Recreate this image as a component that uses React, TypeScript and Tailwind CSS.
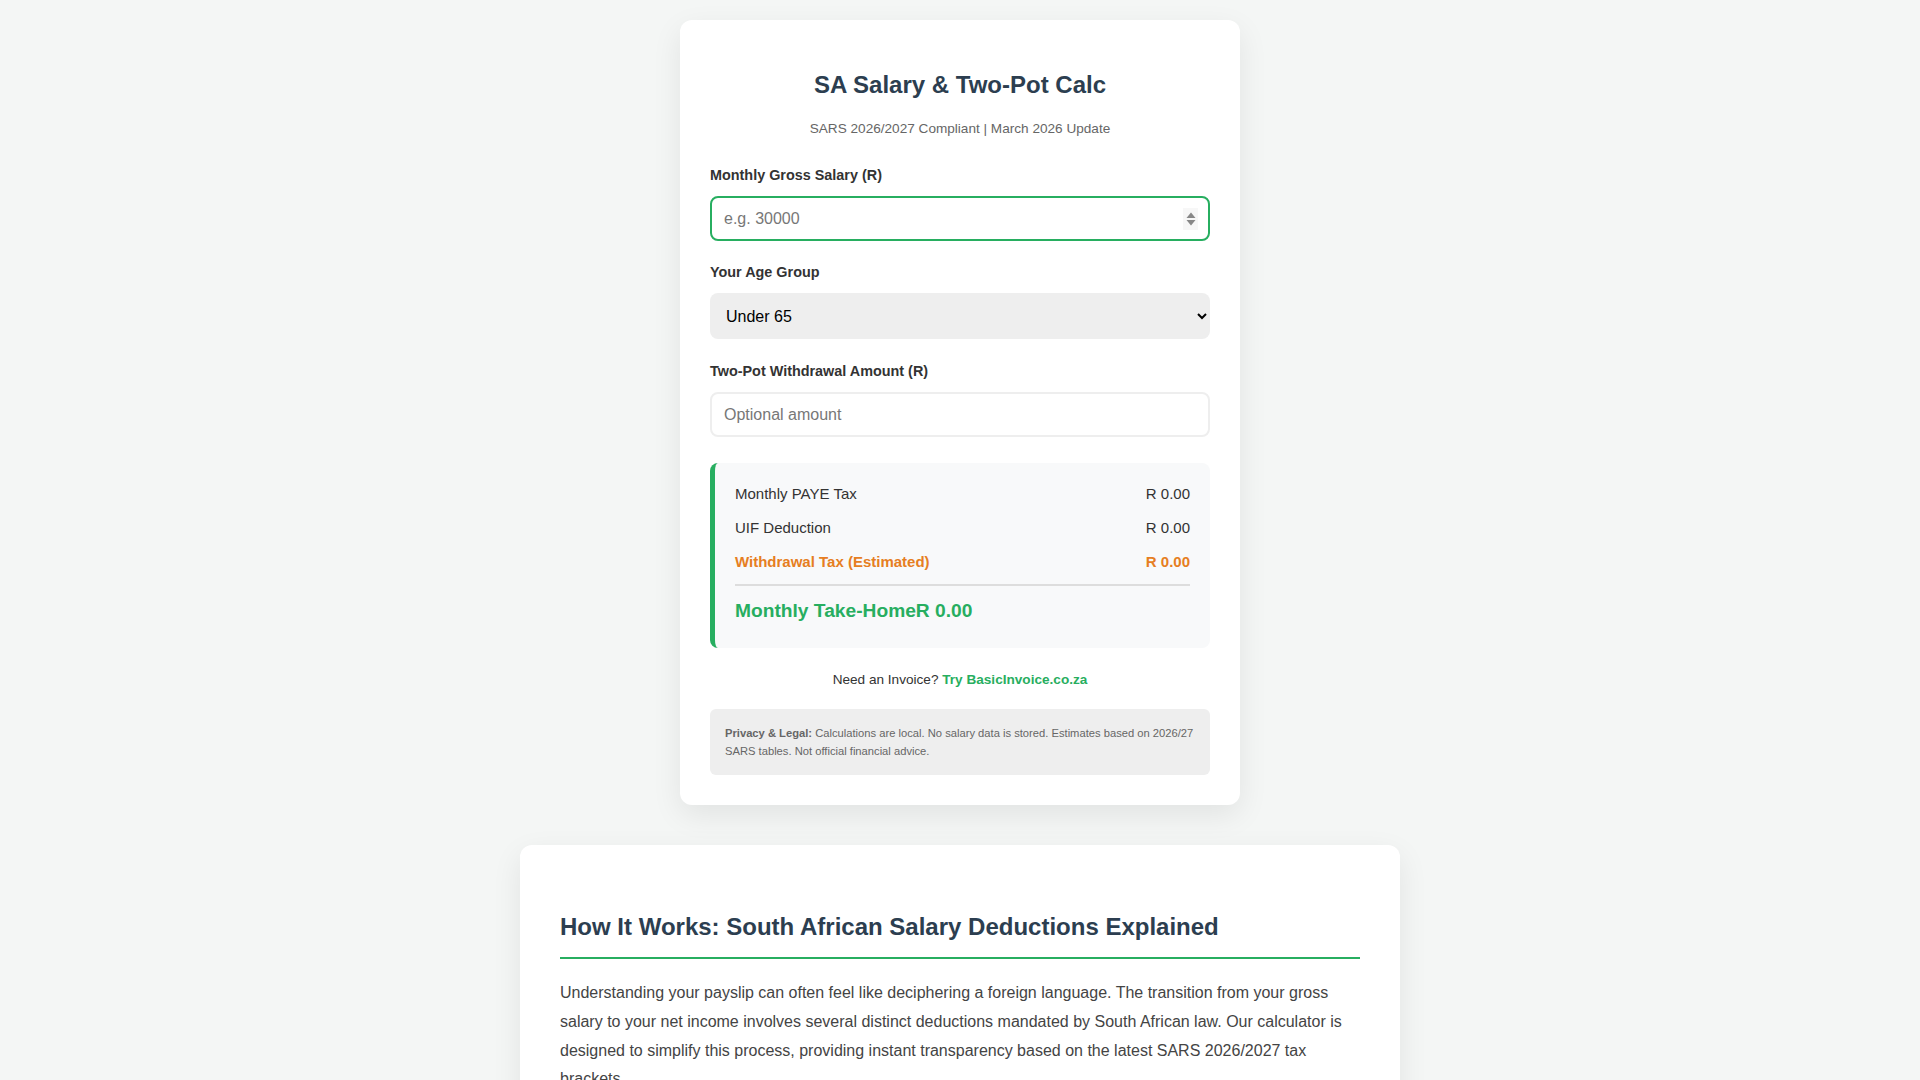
import { useState } from 'react';

const font = { fontFamily: '"Liberation Sans", Arial, sans-serif' };

const Row = ({ label, value, accent }: { label: string; value: string; accent?: boolean }) => (
  <div
    className={`flex justify-between text-[15px] leading-[21px] mb-[13px] ${
      accent ? 'text-[#e67e22] font-bold' : 'text-[#333]'
    }`}
  >
    <span>{label}</span>
    <span>{value}</span>
  </div>
);

export default function App() {
  const [salary, setSalary] = useState('');
  const [age, setAge] = useState('under65');
  const [withdrawal, setWithdrawal] = useState('');

  return (
    <div className="min-h-screen bg-[#f4f6f5] pt-5 pb-10" style={font}>
      {/* Calculator card */}
      <div className="w-[560px] mx-auto bg-white rounded-xl px-[30px] pt-[30px] pb-[30px] shadow-[0_10px_30px_rgba(0,0,0,0.08)]">
        <h1 className="mt-[21px] text-center text-[24px] leading-[28px] font-bold text-[#2c3e50]">
          SA Salary &amp; Two-Pot Calc
        </h1>
        <p className="mt-[22px] text-center text-[13.6px] leading-[16px] text-[#666]">
          SARS 2026/2027 Compliant | March 2026 Update
        </p>

        <div className="mt-[30px]">
          <label className="block text-[14.4px] leading-[17px] font-bold text-[#333] mb-3">
            Monthly Gross Salary (R)
          </label>
          <div className="relative">
            <input
              type="text"
              inputMode="numeric"
              value={salary}
              onChange={e => setSalary(e.target.value)}
              placeholder="e.g. 30000"
              className="w-full h-[45px] px-3 text-[16px] border-2 border-[#27ae60] rounded-lg outline-none placeholder:text-[#777] text-[#222]"
            />
            <div className="absolute right-[12px] top-1/2 -translate-y-1/2 w-[15px] h-[22px] bg-[#f7f7f7] flex items-center justify-center">
              <svg width="10" height="16" viewBox="0 0 10 16">
                <path d="M5 1.5 L9.5 7 H0.5 Z" fill="#888" />
                <path d="M5 14.5 L9.5 9 H0.5 Z" fill="#888" />
              </svg>
            </div>
          </div>
        </div>

        <div className="mt-[23px]">
          <label className="block text-[14.4px] leading-[17px] font-bold text-[#333] mb-3">Your Age Group</label>
          <select
            value={age}
            onChange={e => setAge(e.target.value)}
            className="w-full h-[46px] px-3 text-[16px] bg-[#eee] rounded-lg outline-none text-black"
          >
            <option value="under65">Under 65</option>
            <option value="65to74">65 to 74</option>
            <option value="75plus">75 and older</option>
          </select>
        </div>

        <div className="mt-[24px]">
          <label className="block text-[14.4px] leading-[17px] font-bold text-[#333] mb-3">
            Two-Pot Withdrawal Amount (R)
          </label>
          <input
            type="text"
            inputMode="numeric"
            value={withdrawal}
            onChange={e => setWithdrawal(e.target.value)}
            placeholder="Optional amount"
            className="w-full h-[45px] px-3 text-[16px] border-2 border-[#eee] rounded-lg outline-none placeholder:text-[#777] text-[#222]"
          />
        </div>

        {/* Results */}
        <div className="mt-[26px] bg-[#f8f9fa] border-l-[5px] border-[#27ae60] rounded-lg pl-5 pr-5 pt-5 pb-[26px]">
          <Row label="Monthly PAYE Tax" value="R 0.00" />
          <Row label="UIF Deduction" value="R 0.00" />
          <Row label="Withdrawal Tax (Estimated)" value="R 0.00" accent />
          <div className="h-[2px] bg-[#ddd] mt-[-1px]" />
          <div className="mt-[13px] text-[19.2px] leading-[23px] font-bold text-[#27ae60]">
            Monthly Take-HomeR 0.00
          </div>
        </div>

        <p className="mt-[24px] text-center text-[13.6px] leading-[16px] text-[#333]">
          Need an Invoice?{' '}
          <a href="#" className="text-[#27ae60] font-bold">
            Try BasicInvoice.co.za
          </a>
        </p>

        <div className="mt-[21px] bg-[#eee] rounded-md px-[15px] py-[15px] text-[11.2px] leading-[18px] text-[#666]">
          <strong>Privacy &amp; Legal:</strong> Calculations are local. No salary data is stored. Estimates based on
          2026/27 SARS tables. Not official financial advice.
        </div>
      </div>

      {/* Article */}
      <div className="w-[880px] mx-auto mt-10 bg-white rounded-xl px-10 pt-10 pb-10 shadow-[0_10px_30px_rgba(0,0,0,0.08)]">
        <h2 className="mt-[28px] text-[24px] leading-[28px] font-bold text-[#2c3e50] pb-4 border-b-2 border-[#27ae60]">
          How It Works: South African Salary Deductions Explained
        </h2>
        <p className="mt-5 text-[16px] leading-[28.8px] text-[#444]">
          Understanding your payslip can often feel like deciphering a foreign language. The transition from your gross
          salary to your net income involves several distinct deductions mandated by South African law. Our calculator is
          designed to simplify this process, providing instant transparency based on the latest SARS 2026/2027 tax
          brackets.
        </p>
        <h3 className="mt-6 text-[20px] font-bold text-[#2c3e50]">1. PAYE (Pay-As-You-Earn)</h3>
        <p className="mt-3 text-[16px] leading-[28.8px] text-[#444]">
          PAYE is the income tax withheld by your employer each month and paid over to SARS on your behalf. It is
          calculated on your annualised taxable income, less the primary, secondary or tertiary rebate for your age group.
        </p>
      </div>
    </div>
  );
}
